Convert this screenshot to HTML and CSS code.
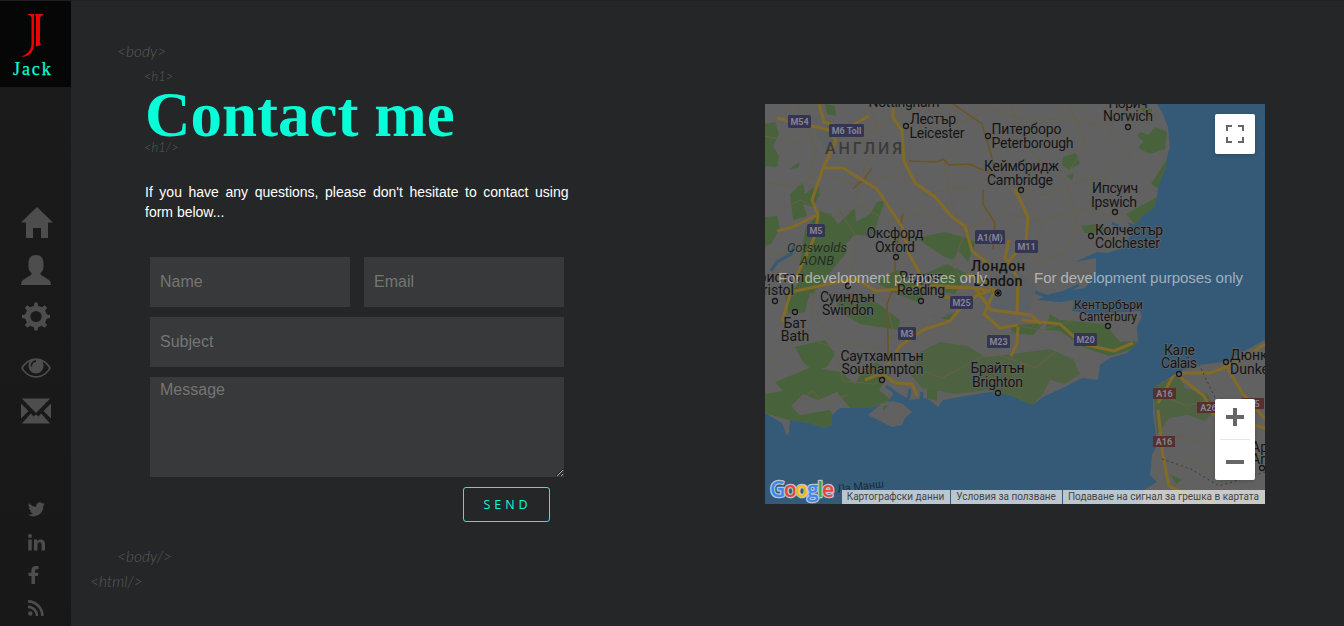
FILE: index.html
```html
<!DOCTYPE html>
<html lang="en">
<head>
<meta charset="utf-8">
<title>Jack - Contact</title>
<link rel="stylesheet" href="styles.css">
</head>
<body>
<div class="page">
  <aside class="sidebar">
    <a class="brand" href="#">
      <svg class="brand-mark" width="24" height="46" viewBox="0 0 24 46">
        <path fill="#f00000" d="M7 1H13V30C13 39 8 44 0 44C7 41 10.500 37 10.500 30V5Q10 2 7 2ZM14 1H22V2Q19 3 19 6V28Q19 31 20 32L15 33.500V4Z"/>
      </svg>
      <span class="brand-name">Jack</span>
    </a>
    <nav class="menu">
      <a href="#"><svg width="32" height="31" viewBox="0 0 32 31"><path d="M16 0 32 15.500H27V31H20V21H12V31H5V15.500H0Z"/></svg></a>
      <a href="#"><svg width="30" height="30" viewBox="0 0 30 30"><path d="M15 0C20 0 22.500 3.500 22.500 8V12C22.500 15 21 17 19.500 18V19.500L28 25Q30 26.500 30 30H0Q0 26.500 2 25L10.500 19.500V18C9 17 7.500 15 7.500 12V8C7.500 3.500 10 0 15 0Z"/></svg></a>
      <a href="#"><svg width="30" height="29" viewBox="-15 -14.500 30 29"><circle r="8.200" fill="none" stroke="#4d4d4e" stroke-width="5.200"/><path d="M-2.500-9-1.500-14H1.500L2.500-9ZM-2.500 9-1.500 14H1.500L2.500 9ZM-9-2.500-14-1.500V1.500L-9 2.500ZM9-2.500 14-1.500V1.500L9 2.500Z"/><path transform="rotate(45)" d="M-2.500-9-1.800-14H1.800L2.500-9ZM-2.500 9-1.800 14H1.800L2.500 9ZM-9-2.500-14-1.800V1.800L-9 2.500ZM9-2.500 14-1.800V1.800L9 2.500Z"/></svg></a>
      <a href="#"><svg width="30" height="20" viewBox="0 0 30 20"><path fill-rule="evenodd" d="M0 10C4 3 10 .3 15 .3S26 3 30 10C26 17 20 19.700 15 19.700S4 17 0 10ZM2 10C5 15.500 10 18 15 18S25 15.500 28 10C26 7 24 5 21.500 3.500Q22.500 5.500 22.500 8A7.500 7.500 0 0 1 7.500 8Q7.500 5.500 8.500 3.500C6 5 4 7 2 10ZM15 2.300C12 2.300 9.600 5 9.600 8.500H11C11 6 12.500 3.900 15 3.900Z"/></svg></a>
      <a href="#"><svg width="30" height="26" viewBox="0 0 30 26"><path d="M.8.500H29.200L15 15ZM0 5.500 7.500 13 0 20.500ZM30 5.500V20.500L22.500 13ZM.8 25.500 10 15.500 12.500 18.500 15 16.500 17.500 18.500 20 15.500 29.200 25.500Z"/></svg></a>
    </nav>
    <div class="social">
      <a href="#"><svg width="17" height="15" viewBox="0 0 24 20"><path d="M24 2.400a9.800 9.800 0 0 1-2.800.8A5 5 0 0 0 23.300.5a10 10 0 0 1-3.100 1.200A4.900 4.900 0 0 0 11.800 6.200 14 14 0 0 1 1.700 1a4.900 4.900 0 0 0 1.500 6.600A5 5 0 0 1 1 7a4.900 4.900 0 0 0 3.900 4.900 5 5 0 0 1-2.200.1 4.900 4.900 0 0 0 4.600 3.400A9.900 9.900 0 0 1 0 17.500 14 14 0 0 0 21.500 5Z"/></svg></a>
      <a href="#"><svg width="17" height="17" viewBox="0 0 17 17"><circle cx="2" cy="2" r="2"/><path d="M.3 5.500H3.700V16.500H.3ZM6 5.500H9.200V7C11 4.500 17 4.500 17 10V16.500H13.600V10.500C13.600 7.200 9.500 7.500 9.500 10.500V16.500H6Z"/></svg></a>
      <a href="#"><svg width="11" height="18" viewBox="0 0 11 18"><path d="M10.500.2V3.200H8.500Q7 3.200 7 4.800V6.700H10.400L10 10H7V18H3.400V10H.5V6.700H3.400V4.500Q3.400 0 8 0Z"/></svg></a>
      <a href="#"><svg width="16" height="16" viewBox="0 0 16 16"><circle cx="2.300" cy="13.500" r="2.200"/><path fill="none" stroke="#4d4d4e" stroke-width="2.600" d="M0 6.900A8.700 8.700 0 0 1 8.900 16M0 1.400A14.500 14.500 0 0 1 14.400 16"/></svg></a>
    </div>
  </aside>

  <main class="contact">
    <section class="contact-panel">
      <span class="tag tag-body">&lt;body&gt;</span>
      <span class="tag tag-h1">&lt;h1&gt;</span>
      <h1 class="title">Contact me</h1>
      <span class="tag tag-h1-end">&lt;h1/&gt;</span>
      <p class="intro">If you have any questions, please don't hesitate to contact using form below...</p>
      <form class="form">
        <input class="field" type="text" placeholder="Name">
        <input class="field" type="text" placeholder="Email">
        <input class="field wide" type="text" placeholder="Subject">
        <textarea class="field wide message" placeholder="Message"></textarea>
        <button class="send" type="button">SEND</button>
      </form>
      <span class="tag tag-body-end">&lt;body/&gt;</span>
      <span class="tag tag-html-end">&lt;html/&gt;</span>
    </section>

    <section class="map">
      <svg class="map-canvas" width="500" height="400" viewBox="0 0 500 400">
        <defs>
          <clipPath id="land-clip"><path id="land" d="M0 0H392L397 8 403 23 405 43 402 53 401 63 393 83 392 93 389 104 378 111 370 121 362 118 368 126 362 138 358 144 342 149 332 148 310 158 331 154V168L320 184 288 189 272 196 295 198 310 196 307 207 330 210 375 207 377 212 372 223 373 239 362 249 345 254 335 261 333 276 317 274 300 283 278 293 268 301 255 296 245 291 225 288 195 293 178 296 173 303 162 294 145 296 130 287 123 298 105 304 75 304 67 311V321L60 324 45 319 25 316 24 328 22 332 17 319 0 309ZM103 311 117 299 128 297 138 300 147 308 140 314 137 321 127 323ZM376 400 379 386 392 378 385 371 387 351 392 341 388 308V284L392 281 412 269 432 261 458 258 500 236V400Z"/></clipPath>
        </defs>
        <rect width="500" height="400" fill="#345a78"/>
        <use href="#land" fill="#616161"/>
        <g clip-path="url(#land-clip)">
          <g fill="#48633b">
            <path d="M0 20 10 18 14 30 8 42 14 52 12 63 0 62ZM60 0 70 2 71 12 62 10ZM25 90 38 78 40 90 53 80 55 90 48 103 38 100 42 112 28 116ZM56 107 66 110 73 120 90 104 91 118 105 110 112 98 120 96 112 120 108 132 90 131 73 147 55 141 40 125ZM0 113 12 112 15 125 6 140 0 142ZM28 62 35 58 33 64 25 65Z"/>
            <path d="M40 126 70 130 82 148 64 170 48 190 36 184 26 205 32 180ZM20 190 35 180 45 188 40 208 24 210ZM70 196 83 189 103 192 135 216 133 226 95 220 75 208ZM110 178 132 166 150 174 182 160 202 170 190 190 165 185 152 198 132 190ZM151 134 180 128 201 134 188 156 178 152ZM193 146 201 134 211 138 203 158Z"/>
            <path d="M30 243 60 236 70 250 62 263 48 267 37 257ZM46 263 76 268 90 280 98 266 112 258 125 270 114 286 126 296 105 304H85L72 288 53 296 38 290 26 302 35 311 65 306 72 317 60 326 45 320 20 315 0 309V290L18 287 10 278 30 270ZM285 210 295 216 340 220 355 238 374 237 366 246 344 252 318 243 295 227 280 226ZM246 221 278 220 268 231 247 229ZM375 4 387 5 384 15ZM390 23 402 28 400 45 385 50 373 44ZM375 28 396 35 387 44 372 32ZM402 55 402 66 393 84 386 80ZM361 110 392 93 390 105 370 121ZM298 53 311 49 315 60 304 66 297 61ZM301 72 309 69 307 76ZM316 122 333 120 345 128 320 129Z"/>
            <path d="M405 370 417 376 411 380ZM165 210 175 218 168 212ZM176 214 190 208 184 216ZM162 284H172V297L162 294ZM118 302 124 301 118 307Z"/>
          </g>
          <g fill="#4e6242">
            <path d="M155 248 175 238 203 242 220 253 248 250 285 245 308 255 315 270 300 280 285 276 278 290 268 301 248 294 222 286 190 290 157 284 145 270ZM388 284 413 269 420 284 443 290 450 306 440 317 423 311 404 314 392 331ZM455 294 467 298 460 306Z"/>
          </g>
          <g fill="#5b6064"><path d="M235 170 253 168 270 182 265 205 247 210 229 203 220 187ZM50 28 64 22 70 36 60 45Z"/></g>
          <g fill="none" stroke="#686049" stroke-width="1">
            <path d="M0 32 38 40 58 30 82 44 128 13 160 3 198 18 226 5 266 18 300 13 335 22 372 8M0 78 31 83 57 68 86 80 131 71 160 90 209 82 228 72 280 91 327 73 382 93M11 108 36 96 68 113 97 102 122 117 159 108 196 128 236 109 277 117 316 105 365 115M33 0 51 44 42 80 71 101 90 131 88 171 121 197 131 238M106 0 116 39 100 62 91 97M187 0 196 31 180 60 186 98 199 130 188 162 205 189M247 0 252 35 275 54 260 88 277 122 262 154M305 0 320 41 300 74 313 120 298 150 270 160M355 0 344 27 366 51 339 77 350 112M0 149 29 151 51 183 47 213 78 240 112 244 132 230 160 238 185 222 209 239 237 218 275 226 330 210M0 260 38 232 69 244 78 277 109 280 144 262 177 274 226 248 270 264 303 238M82 291 60 299 47 287 27 302M387 350 412 332 434 339 459 327 500 337M388 288 422 302 445 295 478 308 500 291M390 382 423 356 450 365 481 339 500 350"/>
          </g>
          <g fill="none" stroke="#6d5421" stroke-width="1.500"><path d="M188 0 217 20 226 50 230 68M144 57 172 58 178 55 184 61 204 60 230 71M218 85 218 100 230 119 228 145M107 64 100 74 88 85M138 109 130 151 130 180 122 200 123 235 123 260"/></g>
          <g fill="none" stroke="#826b26" stroke-width="3" stroke-linejoin="round">
            <path d="M12 14 64 26 71 37 58 64 47 96 53 111 50 132 28 180 17 218M58 64 78 64 112 85 137 123 144 150 161 181 210 184 226 187M12 127 28 123 52 111M54 0 59 18 80 25 104 12M128 0V14L137 26 139 57 150 79 170 93 187 113 200 122 207 147 231 166M20 189 45 184 72 178 91 175 111 187 155 183 187 195M155 183 210 184 226 206 266 211 276 220M115 273 135 242 158 226 185 217 202 196 223 187M244 136 240 154 253 174 252 209M250 85 263 113 261 139 239 162M202 170 230 186 219 210 235 224 253 221M253 223 252 240 246 252M257 216 295 220 317 240 349 247 368 239M100 276 117 269 130 279 147 280 152 292M393 299 410 269 445 269 474 258 500 240M411 270 439 292 448 310 500 324M393 306 398 352 404 382 418 389 450 400M455 252 478 290 500 315"/>
          </g>
          <path d="M434 260 450 294 477 306 481 330 500 354M397 355 426 365 454 382 500 368" fill="none" stroke="#3b3b3b" stroke-dasharray="2 3"/>
        </g>
        <path d="M6 167 12 158 26 150 29 142M121 282 128 287 141 300M145 285 143 297M157 288 156 297M270 188 286 194 314 181M347 119 361 127" fill="none" stroke="#345a78" stroke-width="3"/>

        <g fill="#343453">
          <rect x="23" y="11" width="23" height="13" rx="1.500"/><rect x="64" y="20" width="35" height="13" rx="1.500"/><rect x="42" y="120" width="18" height="13" rx="1.500"/><rect x="210" y="126" width="30" height="14" rx="1.500"/><rect x="250" y="136" width="23" height="13" rx="1.500"/><rect x="185" y="192" width="23" height="13" rx="1.500"/><rect x="133" y="223" width="18" height="13" rx="1.500"/><rect x="222" y="231" width="23" height="13" rx="1.500"/><rect x="309" y="229" width="23" height="13" rx="1.500"/>
          <g fill="#582f2f"><rect x="388" y="284" width="23" height="11"/><rect x="432" y="298" width="23" height="11"/><rect x="388" y="332" width="22" height="11"/><rect x="476" y="294" width="23" height="11"/></g>
        </g>
        <g class="road-labels">
          <text x="34.500" y="21">M54</text><text x="81.500" y="30">M6 Toll</text><text x="51" y="130">M5</text><text x="225" y="137">A1(M)</text><text x="261.500" y="146">M11</text><text x="196.500" y="202">M25</text><text x="142" y="233">M3</text><text x="233.500" y="241">M23</text><text x="320.500" y="239">M20</text><text x="399.500" y="293">A16</text><text x="443.500" y="307">A26</text><text x="399" y="341">A16</text><text x="492" y="303">5</text>
        </g>
        <text class="country" x="60" y="50" textLength="77">АНГЛИЯ</text>
        <g class="places">
          <text x="139" y="3" textLength="71">Nottingham</text>
          <text x="168" y="20" textLength="46">Лестър</text><text x="172" y="34" textLength="55">Leicester</text>
          <text x="261.500" y="30" textLength="70">Питерборо</text><text x="267.500" y="44" textLength="82">Peterborough</text>
          <text x="256.500" y="67" textLength="75">Кеймбридж</text><text x="255" y="81" textLength="66">Cambridge</text>
          <text x="363" y="4" textLength="39">Норич</text><text x="363" y="17" textLength="50">Norwich</text>
          <text x="350" y="89" textLength="46">Ипсуич</text><text x="349" y="103" textLength="46">Ipswich</text>
          <text x="364" y="131" textLength="68">Колчестър</text><text x="362.500" y="144" textLength="65">Colchester</text>
          <text x="130" y="134" textLength="57">Оксфорд</text><text x="130" y="148" textLength="40">Oxford</text>
          <text x="12" y="178">Бристол</text><text x="9" y="191">Bristol</text>
          <text x="82.500" y="198" textLength="55">Суиндън</text><text x="83" y="211" textLength="52">Swindon</text>
          <text x="30" y="224">Бат</text><text x="30" y="237">Bath</text>
          <text x="156" y="178" textLength="44">Рединг</text><text x="156" y="191" textLength="48">Reading</text>
          <text x="117" y="257" textLength="83">Саутхамптън</text><text x="117.500" y="270" textLength="82">Southampton</text>
          <text x="232.500" y="269" textLength="54">Брайтън</text><text x="232.500" y="283" textLength="51">Brighton</text>
          <text x="414.500" y="251" textLength="31">Кале</text><text x="414" y="264" textLength="36">Calais</text>
          <g class="start"><text x="465" y="256">Дюнкерк</text><text x="465" y="270">Dunkerque</text><text x="486" y="348">Арас</text><text x="486" y="360">Arras</text></g>
          <g class="small"><text x="343.500" y="205" textLength="69">Кентърбъри</text><text x="343" y="217" textLength="58">Canterbury</text></g>
          <g class="capital"><text x="233" y="167" textLength="54">Лондон</text><text x="233" y="182" textLength="49">London</text></g>
          <g class="park"><text x="52" y="148" textLength="60">Cotswolds</text><text x="52" y="161" textLength="34">AONB</text></g>
          <text class="sea" x="96" y="386" transform="rotate(-7 96 386)" textLength="47">Ла Манш</text>
        </g>
        <g fill="#616161" stroke="#171717" stroke-width="1.300">
          <circle cx="141" cy="22" r="2.500"/><circle cx="223" cy="32" r="2.500"/><circle cx="363" cy="23" r="2.500"/><circle cx="256" cy="86" r="2.500"/><circle cx="350" cy="108" r="2.500"/><circle cx="326" cy="132" r="2.500"/><circle cx="131" cy="153" r="2.500"/><circle cx="10" cy="197" r="2.500"/><circle cx="83" cy="182" r="2.500"/><circle cx="30" cy="208" r="2.500"/><circle cx="156" cy="197" r="2.500"/><circle cx="117" cy="276" r="2.500"/><circle cx="233" cy="289" r="2.500"/><circle cx="343" cy="222" r="2.500"/><circle cx="414" cy="270" r="2.500"/><circle cx="461" cy="258" r="2.500"/><circle cx="497" cy="364" r="2.500"/>
        </g>
        <circle cx="233" cy="189" r="3.500" fill="#080808"/><circle cx="233" cy="189" r="2.300" fill="none" stroke="#777" stroke-width=".7"/>
        <g class="notice"><text x="13" y="178.500" textLength="209">For development purposes only</text><text x="269" y="178.500" textLength="209">For development purposes only</text></g>
        <g class="google"><text x="5" y="393" textLength="64"><tspan fill="#4285f4">G</tspan><tspan fill="#ea4335">o</tspan><tspan fill="#fbbc05">o</tspan><tspan fill="#4285f4">g</tspan><tspan fill="#34a853">l</tspan><tspan fill="#ea4335">e</tspan></text></g>
      </svg>
      <button class="map-btn fullscreen" type="button" aria-label="Fullscreen"><svg width="18" height="18"><path fill="none" stroke="#666" stroke-width="2" d="M1 6V1H6M12 1H17V6M17 12V17H12M6 17H1V12"/></svg></button>
      <div class="map-btn zoom">
        <svg width="18" height="18"><path fill="#666" d="M7 0H11V7H18V11H11V18H7V11H0V7H7Z"/></svg>
        <svg width="18" height="18"><path fill="#666" d="M0 7H18V11H0Z"/></svg>
      </div>
      <footer class="legal"><span>Картографски данни</span><span>Условия за ползване</span><span>Подаване на сигнал за грешка в картата</span></footer>
    </section>
  </main>
</div>
</body>
</html>
```
FILE: styles.css
```css
* { box-sizing: border-box; }
body { margin: 0; overflow: hidden; background: #252627; font-family: "Liberation Sans", Arial, sans-serif; }
.page { display: flex; height: 626px; border-top: 1px solid #1f2021; }

.sidebar { width: 71px; flex: none; background: linear-gradient(#1b1b1b, #181818); }
.sidebar svg { display: block; fill: #4d4d4e; }
.brand { display: block; height: 86px; padding-top: 12px; background: #060606; text-decoration: none; }
.brand-mark { margin-left: 21px; }
.brand-name { display: block; margin: 0 0 0 13px; font: 18px/20px "Liberation Serif", serif; letter-spacing: 1.9px; color: #08fdd8; -webkit-text-stroke: .25px #08fdd8; }
.menu { display: flex; flex-direction: column; padding: 120px 0 0 21px; }
.menu a:nth-child(2) { margin-top: 17px; }
.menu a:nth-child(3) { margin-top: 17px; }
.menu a:nth-child(4) { margin-top: 27px; }
.menu a:nth-child(5) { margin-top: 20px; }
.social { display: flex; flex-direction: column; padding: 78px 0 0 28px; }
.social a:nth-child(2) { margin-top: 17px; }
.social a:nth-child(3) { margin-top: 15px; }
.social a:nth-child(4) { margin-top: 16px; }

.contact { display: flex; flex: 1; align-items: flex-start; }
.contact-panel { display: flex; flex-direction: column; align-items: flex-start; width: 694px; padding: 38px 0 0 74px; }
.tag { height: 24px; color: #5a5a5b; font: italic 300 15.500px/24px Lato, sans-serif; white-space: nowrap; }
.tag-body { margin-left: -28px; }
.tag-h1, .tag-h1-end { height: 20px; margin-left: -1px; font-size: 13px; line-height: 20px; }
.tag-h1 { margin-top: 3px; }
.title { margin: -1px 0 -8px; color: #08fdd8; font: bold 63px/60px "Liberation Serif", serif; }
.intro { width: 423.500px; margin: 25px 0 35px; color: #fff; font-size: 14px; line-height: 20px; text-align: justify; }
.form { display: grid; grid-template-columns: 200px 200px; gap: 10px 14px; margin-left: 5px; }
.field { width: 100%; height: 50px; margin: 0; padding: 0 10px; border: 0; border-radius: 0; background: #38393a; color: #fff; font: 16px "Liberation Sans", Arial, sans-serif; }
.field::placeholder { color: #757575; }
.wide { grid-column: 1 / -1; }
.message { display: block; height: 100px; padding-top: 4px; }
.send { grid-column: 1 / -1; justify-self: end; width: 87px; height: 35px; margin-right: 14px; padding: 0 0 0 2px; border: 1px solid #08fdd8; border-radius: 3px; background: none; color: #08fdd8; font: 500 12.500px "Open Sans", sans-serif; letter-spacing: 3.900px; }
.tag-body-end { margin: 22px 0 0 -28px; }
.tag-html-end { margin: 1px 0 0 -55px; }

.map { position: relative; width: 500px; height: 400px; margin-top: 103px; overflow: hidden; }
.map-canvas { display: block; font-family: Roboto, "Noto Sans", sans-serif; }
.road-labels { fill: #858592; font-size: 9px; font-weight: 700; text-anchor: middle; }
.country { fill: #3b3b3b; font-size: 16px; font-weight: 500; }
.places { fill: #151515; stroke: #616161; stroke-width: 1.5px; paint-order: stroke; font-size: 14px; text-anchor: middle; }
.places .start { text-anchor: start; }
.places .small { font-size: 12px; }
.places .capital { font-size: 14.500px; font-weight: 500; }
.places .park { font-style: italic; font-size: 13px; fill: #242d22; stroke: none; }
.places .sea { font-size: 11px; fill: #1c2d3b; stroke: none; }
.notice { fill: rgba(255, 255, 255, .53); font: 15px "Liberation Sans", Arial, sans-serif; }
.google { font: 600 21px "Open Sans", sans-serif; stroke: #b8c5d0; stroke-width: 2.5px; paint-order: stroke; stroke-linejoin: round; }
.map-btn { position: absolute; right: 10px; width: 40px; padding: 0; border: 0; border-radius: 2px; background: #fff; box-shadow: 0 1px 4px -1px rgba(0, 0, 0, .3); }
.fullscreen { top: 10px; height: 40px; display: grid; place-items: center; }
.zoom { top: 295px; height: 81px; display: grid; grid-template-rows: 40px 40px; place-items: center; background: linear-gradient(#e6e6e6, #e6e6e6) 5px 40px / 30px 1px no-repeat #fff; }
.zoom svg:first-child { margin-top: -5px; }
.zoom svg:last-child { margin-top: 6px; }
.legal { position: absolute; right: 0; bottom: 0; display: flex; gap: 1px; height: 14px; color: #444; font: 10px/14px Roboto, sans-serif; white-space: nowrap; }
.legal span { padding: 0 6px 0 5px; background: rgba(245, 245, 245, .7); }
```
